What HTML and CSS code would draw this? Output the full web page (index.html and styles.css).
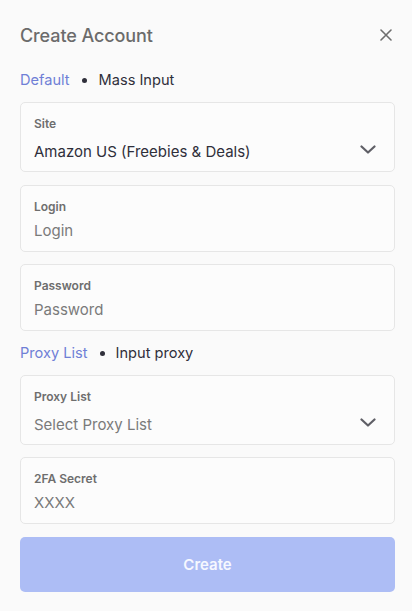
FILE: index.html
```html
<!DOCTYPE html>
<html>
<head>
<meta charset="utf-8">
<link rel="stylesheet" href="styles.css">
</head>
<body>
<div class="modal">
  <div class="header">
    <h1 class="title">Create Account</h1>
    <svg class="close" width="12" height="12" viewBox="0 0 12 12"><path d="M1 1L11 11M11 1L1 11" stroke="#6e6e6e" stroke-width="1.6" stroke-linecap="round"/></svg>
  </div>
  <div class="tabs tabs-top">
    <span class="tab active">Default</span><span class="dot"></span><span class="tab">Mass Input</span>
  </div>
  <div class="field select first">
    <div class="label">Site</div>
    <div class="value-row">
      <div class="value">Amazon US (Freebies &amp; Deals)</div>
      <svg class="chev" width="16" height="9" viewBox="0 0 16 9"><path d="M1.5 1.5L8 7.5L14.5 1.5" fill="none" stroke="#5f5f66" stroke-width="2.2" stroke-linecap="round" stroke-linejoin="round"/></svg>
    </div>
  </div>
  <div class="field">
    <div class="label">Login</div>
    <div class="value placeholder">Login</div>
  </div>
  <div class="field">
    <div class="label">Password</div>
    <div class="value placeholder">Password</div>
  </div>
  <div class="tabs tabs-proxy">
    <span class="tab active">Proxy List</span><span class="dot"></span><span class="tab">Input proxy</span>
  </div>
  <div class="field select">
    <div class="label">Proxy List</div>
    <div class="value-row">
      <div class="value placeholder">Select Proxy List</div>
      <svg class="chev" width="16" height="9" viewBox="0 0 16 9"><path d="M1.5 1.5L8 7.5L14.5 1.5" fill="none" stroke="#5f5f66" stroke-width="2.2" stroke-linecap="round" stroke-linejoin="round"/></svg>
    </div>
  </div>
  <div class="field">
    <div class="label">2FA Secret</div>
    <div class="value placeholder">XXXX</div>
  </div>
  <button class="create">Create</button>
</div>
</body>
</html>
```
FILE: styles.css
```css
* { box-sizing: border-box; }
html, body { margin: 0; padding: 0; }
body {
  background: #fafafa;
  font-family: Inter, "Noto Sans", sans-serif;
  width: 412px;
  height: 611px;
  overflow: hidden;
}
.modal {
  padding: 24px 17px 0 20px;
  display: flex;
  flex-direction: column;
}
.header {
  display: flex;
  align-items: center;
  justify-content: space-between;
  height: 22px;
  padding-right: 3px;
}
.title {
  margin: 0;
  font-size: 18px;
  font-weight: 500;
  color: #6b6b6b;
  letter-spacing: -0.1px;
}
.close { display: block; }
.tabs {
  display: flex;
  align-items: center;
  font-size: 14.6px;
  color: #2f2f3a;
  height: 20px;
}
.tabs-top { margin-top: 24px; margin-bottom: 12px; }
.tabs-proxy { margin-top: 0; margin-bottom: 12px; }
.tab.active { color: #6f7fd6; }
.dot {
  width: 5px;
  height: 5px;
  border-radius: 50%;
  background: #2f2f3a;
  margin: 0 12px 0 12px;
}
.tabs-proxy .dot { margin: 0 11px 0 12px; }
.field {
  background: #fcfcfc;
  border: 1px solid #e6e6e6;
  border-radius: 5px;
  height: 67px;
  padding: 13px 12px 0 13px;
  margin-bottom: 12px;
  display: flex;
  flex-direction: column;
}
.field.select { height: 70px; }
.field.first { margin-bottom: 13px; }
.label {
  font-size: 12px;
  font-weight: 600;
  color: #6e6e6e;
  line-height: 16px;
}
.value {
  font-size: 15px;
  color: #2f2f3a;
  line-height: 20px;
  margin-top: 6px;
}
.value-row {
  display: flex;
  align-items: center;
  justify-content: space-between;
  margin-top: 10px;
}
.value-row .value { margin-top: 0; }
.value.placeholder { color: #7a7a7a; }
.chev { margin-right: 6px; margin-bottom: 5px; display: block; }
.create {
  margin-top: 1px;
  height: 55px;
  border: none;
  border-radius: 5px;
  background: #adbdf5;
  color: #f6f8ff;
  font-family: Inter, "Noto Sans", sans-serif;
  font-size: 15px;
  font-weight: 600;
  width: 100%;
}
```
